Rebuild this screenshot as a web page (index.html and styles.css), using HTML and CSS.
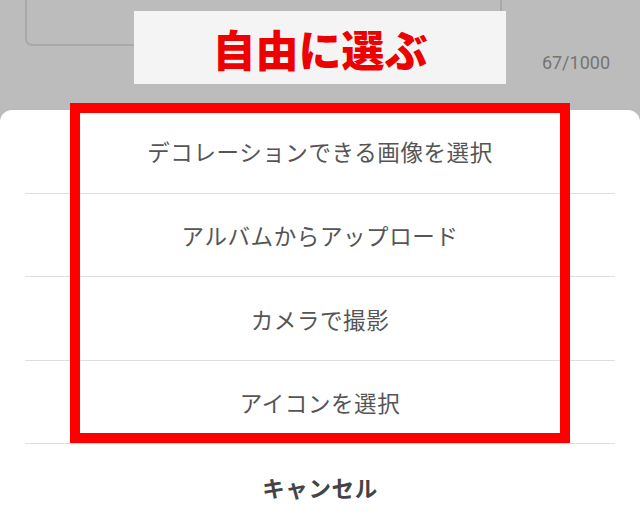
FILE: index.html
```html
<!DOCTYPE html>
<html lang="ja">
<head>
  <meta charset="UTF-8" />
  <meta name="viewport" content="width=device-width, initial-scale=1" />
  <title>画像を選択</title>
  <link rel="stylesheet" href="styles.css">
</head>
<body>
  <div class="screen">
    <div class="editor">
      <div class="textarea"></div>
      <div class="counter">67/1000</div>
    </div>

    <div class="sheet">
      <div class="item">デコレーションできる画像を選択</div>
      <div class="item">アルバムからアップロード</div>
      <div class="item">カメラで撮影</div>
      <div class="item">アイコンを選択</div>
      <div class="item cancel">キャンセル</div>
    </div>

    <!-- 注釈 -->
    <div class="label">自由に選ぶ</div>
    <div class="highlight"></div>
  </div>
</body>
</html>
```

FILE: styles.css
```css
body {
  margin: 0;
  font-family: "Noto Sans CJK JP", "Noto Sans", sans-serif;
  overflow: hidden;
}
.screen {
  position: relative;
  height: 519px;
  background: #bcbcbc;
  overflow: hidden;
}
.editor { padding: 0 138px 0 25px; }
.textarea {
  height: 100px;
  margin-top: -58px;
  border: 2px solid #a9a9a9;
  border-radius: 7px;
}
.counter {
  margin-right: -108px;
  margin-top: 5px;
  text-align: right;
  font-family: Roboto, "Noto Sans", sans-serif;
  font-size: 18px;
  line-height: 24px;
  color: #747474;
}
.sheet {
  margin-top: 35px;
  height: 420px;
  background: #fff;
  border-radius: 12px 12px 0 0;
  display: flex;
  flex-direction: column;
}
.item {
  height: 83px;
  margin: 0 25px;
  border-bottom: 1px solid #dedede;
  display: flex;
  align-items: center;
  justify-content: center;
  font-size: 22.5px;
  color: #555;
  letter-spacing: 0.6px;
}
.cancel {
  height: 86px;
  border-bottom: none;
  font-weight: bold;
  color: #444;
}
.label {
  position: absolute;
  left: 134px;
  top: 11px;
  width: 372px;
  height: 73px;
  background: #f4f4f4;
  display: flex;
  align-items: center;
  justify-content: center;
  font-size: 43px;
  font-weight: 900;
  color: #ec0000;
  letter-spacing: 0;
}
.highlight {
  position: absolute;
  left: 70px;
  top: 103px;
  width: 500px;
  height: 340px;
  box-sizing: border-box;
  border: 10px solid #ff0000;
}
```
